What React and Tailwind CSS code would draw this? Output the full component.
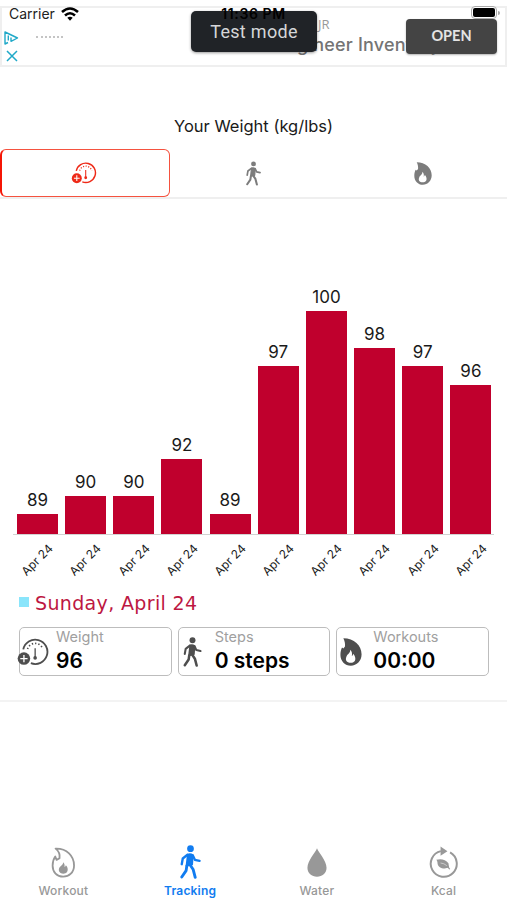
import React from 'react';
import clsx from 'clsx';

const weights = [89, 90, 90, 92, 89, 97, 100, 98, 97, 96];

const WalkIcon = ({ className }) => (
  <svg viewBox="540 48 62 101" className={className} fill="none" stroke="currentColor" strokeLinecap="round" strokeLinejoin="round">
    <circle cx="571" cy="59" r="10" fill="currentColor" stroke="none" />
    <path d="M563 76 Q571 73 578 78 L576 106 L559 110 Z" fill="currentColor" strokeWidth="5" />
    <path d="M562 77 L548 88 L545 105" strokeWidth="7" />
    <path d="M578 79 L584 92 L598 95" strokeWidth="7" />
    <path d="M569 106 L579 121 L585 144" strokeWidth="8.5" />
    <path d="M560 110 L558 124 L545 143" strokeWidth="8.5" />
  </svg>
);

const FlameIcon = ({ className }) => (
  <svg viewBox="271 171 67 86" className={className} fill="currentColor">
    <path
      fillRule="evenodd"
      d="M281 172 C314 172 337 194 337 221 C337 242 322 256 304 256 C286 256 272 242 272 223 C272 213 274 206 277 200 L281 203 L286 197 C287 188 285 180 281 172 Z M302 207 C303 217 295 219 291 227 C285 239 292 247 303 247 C315 247 320 239 317 229 C316 225 314 222 311 219 C311 223 309 225 307 226 C309 219 307 212 302 207 Z"
    />
  </svg>
);

const FlameOutlineIcon = ({ className }) => (
  <svg viewBox="155 47 74 94" className={className} fill="none" stroke="currentColor" strokeWidth="5.5" strokeLinejoin="round">
    <path d="M168 52 C202 51 224 74 224 103 C224 124 209 137 191 137 C172 137 159 123 159 104 C159 92 162 83 167 76 L171 86 L180 81 C182 69 177 59 168 52 Z" />
    <path
      d="M191 93 C191 102 183 103 179 111 C175 121 182 128 191 128 C202 128 207 120 204 110 C203 106 201 104 199 102 C198 105 197 107 195 107 C196 101 195 97 191 93 Z"
      fill="currentColor"
      stroke="none"
    />
  </svg>
);

const ScaleIcon = ({ className }) => (
  <svg viewBox="50 173 97 84" className={className} fill="none" stroke="currentColor">
    <path d="M69 207 A37 37 0 1 1 92 249" strokeWidth="5.5" />
    <path d="M82 206 A24 24 0 0 1 128 206" strokeWidth="5" strokeDasharray="4 6" />
    <path d="M105 204 V230" strokeWidth="4" />
    <circle cx="105" cy="233" r="5.5" fill="currentColor" stroke="none" />
    <circle cx="71" cy="235" r="19" fill="currentColor" stroke="none" />
    <path d="M60 235 H82 M71 224 V246" stroke="white" strokeWidth="4" />
  </svg>
);

const DropIcon = ({ className }) => (
  <svg viewBox="172 55 60 88" className={className} fill="currentColor">
    <path d="M202 56 C206 68 231 93 231 115 C231 132 218 142 202 142 C186 142 173 132 173 115 C173 93 198 68 202 56 Z" />
  </svg>
);

const KcalIcon = ({ className }) => (
  <svg viewBox="538 46 88 96" className={className} fill="none" stroke="currentColor">
    <path d="M602 65 A39.5 39.5 0 1 1 574 61" strokeWidth="6" />
    <path d="M573 47 L594 61 L573 75 Z" fill="currentColor" stroke="none" />
    <path d="M560 87 C572 84 588 84 597 98 L599 111 C581 117 566 111 564 99 C564 94 563 90 560 87 Z" fill="currentColor" stroke="none" />
    <path d="M575 98 Q591 101 601 116" strokeWidth="3.5" />
    <path d="M573 97 Q584 98 592 105" stroke="white" strokeWidth="1.5" />
  </svg>
);

const tabs = [
  { id: 'weight', icon: <ScaleIcon className="w-[26px] h-[22px] -ml-1" /> },
  { id: 'steps', icon: <WalkIcon className="w-[15px] h-[25px]" /> },
  { id: 'workouts', icon: <FlameIcon className="w-[18px] h-[23px]" /> },
];

const stats = [
  { label: 'Weight', value: '96', icon: <ScaleIcon className="w-[32px] h-[28px] -ml-[3px]" /> },
  { label: 'Steps', value: '0 steps', icon: <WalkIcon className="w-[19px] h-[30px] ml-[4px]" /> },
  { label: 'Workouts', value: '00:00', icon: <FlameIcon className="w-[22px] h-[28px] ml-[3px]" /> },
];

const navItems = [
  { label: 'Workout', icon: <FlameOutlineIcon className="w-[25px] h-[31px]" /> },
  { label: 'Tracking', icon: <WalkIcon className="w-[21px] h-[34px]" />, active: true },
  { label: 'Water', icon: <DropIcon className="w-[20px] h-[29px]" /> },
  { label: 'Kcal', icon: <KcalIcon className="w-[29px] h-[32px]" /> },
];

function AdBanner() {
  return (
    <div className="relative h-[67px] pt-1.5">
      <div className="relative h-[61px] border-2 border-[#efefef] overflow-hidden">
        <div className="flex">
          <div className="w-[30px] pt-[23px] pl-[2px] text-[#20a9c8]">
            <svg viewBox="0 0 15 14" className="w-[15px] h-[14px]" fill="none" stroke="currentColor" strokeWidth="1.4" strokeLinejoin="round">
              <path d="M4 11.5 L1 13 V1 L13.5 7 L7 10.3 V6.5 M4.3 4.5 V9.5" />
            </svg>
            <svg viewBox="0 0 12 12" className="w-3 h-3 mt-[5px] ml-0.5" fill="none" stroke="currentColor" strokeWidth="1.5">
              <path d="M1 1 L11 11 M11 1 L1 11" />
            </svg>
          </div>
          <div className="mt-[28px] ml-1 w-[27px] h-0.5 border-t-2 border-dotted border-[#c4c4c4]" />
          <div className="ml-[212px] whitespace-nowrap text-[#747474]">
            <p className="mt-[7px] pl-[43px] font-['Open_Sans'] text-[13px] leading-[18px] text-[#999]">JR</p>
            <p className="text-[18px] leading-6 font-medium tracking-[0.2px]">Engineer Inventory</p>
          </div>
        </div>
      </div>

      <div className="absolute left-[9px] top-[5px] flex items-center gap-1.5 text-[14px] leading-[18px] text-[#222]">
        <span>Carrier</span>
        <svg viewBox="0 0 18 14" className="w-[18px] h-[14px]" fill="none" stroke="black" strokeWidth="2.6">
          <path d="M1 5 Q9 -2 17 5 M4 8.5 Q9 4 14 8.5" />
          <path d="M6.3 10.8 Q9 8.5 11.7 10.8 L9 13.8 Z" fill="black" stroke="none" />
        </svg>
      </div>
      <div className="absolute left-[191px] top-[11px] w-[126px] h-[41px] rounded-[5px] bg-[#202327] shadow-[0_1px_3px_rgba(0,0,0,0.4)] text-center font-['Roboto'] text-[18px] leading-[41px] tracking-[0.3px] text-[#d5d6d8]">
        Test mode
      </div>
      <p className="absolute left-0 w-full top-[5px] text-center text-[14px] leading-[18px] font-semibold text-black tracking-[0.6px]">11:36 PM</p>
      <div className="absolute left-[406px] top-[19px] w-[91px] h-[35px] rounded-[4px] bg-[#444] shadow-[0_1px_2px_rgba(0,0,0,0.3)] text-center font-['Lato'] text-[14.5px] font-bold leading-[34px] text-[#e4e4e4]">
        OPEN
      </div>
      <div className="absolute left-[471px] top-[6px] flex items-center">
        <div className="w-[26px] h-[13px] rounded-[4px] border border-[#aaa] bg-white p-px">
          <div className="h-full rounded-[2px] bg-black" />
        </div>
        <div className="ml-px w-[1.5px] h-1 rounded-r bg-[#aaa]" />
      </div>
    </div>
  );
}

function WeightChart() {
  return (
    <div className="mt-[70px] mx-[13px]">
      <div className="flex h-[266px] items-end gap-[7.17px] pl-1 border-b border-[#d2d2d2]">
        {weights.map((weight, i) => (
          <div key={i} className="w-[41px] shrink-0">
            <p className="mb-[2px] text-center text-[17px] leading-6 text-[#1a1a1a]">{weight}</p>
            <div className="bg-[#c0002d]" style={{ height: 20 + (weight - 89) * 18.45 }} />
          </div>
        ))}
      </div>
      <div className="flex h-[45px] mb-1 items-center gap-[7.17px] pl-[4px]">
        {weights.map((_, i) => (
          <div key={i} className="w-[41px] shrink-0 text-center">
            <span className="inline-block -rotate-45 whitespace-nowrap text-[12px] leading-4 text-[#1a1a1a]">Apr 24</span>
          </div>
        ))}
      </div>
    </div>
  );
}

export default function App() {
  return (
    <div className="flex flex-col w-full h-screen overflow-hidden bg-white font-['Inter',sans-serif]">
      <AdBanner />

      <h1 className="mt-[47px] text-center text-[16.5px] leading-6 text-[#1a1a1a]">Your Weight (kg/lbs)</h1>

      {/* Metric tabs */}
      <div className="mt-[10px] grid grid-cols-3 h-[51px] border-b-2 border-[#efefef]">
        {tabs.map((tab) => (
          <div
            key={tab.id}
            className={clsx(
              'flex items-center justify-center',
              tab.id === 'weight'
                ? 'mr-[-1px] mt-px h-[48px] rounded-[6px] border-[1.5px] border-l-2 border-[#f5523f] border-l-[#f51505] text-[#ee2a18]'
                : 'h-[50px] text-[#7c7c7c]'
            )}
          >
            {tab.icon}
          </div>
        ))}
      </div>

      <WeightChart />

      {/* Selected day */}
      <div className="mt-[6px] ml-[19px] flex items-center">
        <span className="w-[10px] h-[10px] -mt-0.5 bg-[#8ae5fb]" />
        <span className="ml-[6px] font-['DejaVu_Sans'] text-[19px] leading-[26px] tracking-[0.35px] text-[#bd1742]">Sunday, April 24</span>
      </div>

      <div className="mt-[11px] mx-[19px] w-[470px] grid grid-cols-3 gap-[6px]">
        {stats.map((stat) => (
          <div key={stat.label} className="flex items-center h-[49px] rounded-[5px] border-[1.5px] border-[#bdbdbd]">
            <div className="w-[36px] shrink-0 text-[#4e4e4e]">{stat.icon}</div>
            <div className="whitespace-nowrap">
              <p className="text-[14.5px] leading-[18px] text-[#a0a0a0]">{stat.label}</p>
              <p className="mt-px text-[21px] leading-7 font-semibold text-black">{stat.value}</p>
            </div>
          </div>
        ))}
      </div>
      <div className="mt-6 h-0.5 shrink-0 bg-[#f3f3f3]" />

      {/* Bottom navigation */}
      <nav className="mt-auto grid grid-cols-4 h-[56px] shrink-0">
        {navItems.map((item) => (
          <div key={item.label} className={clsx('flex flex-col items-center', item.active ? 'text-[#117cf0]' : 'text-[#989898]')}>
            <div className="h-[36px] flex items-center justify-center">{item.icon}</div>
            <span className={clsx('mt-[3px] text-[12px] leading-4 tracking-[0.2px]', item.active ? 'font-semibold' : 'font-medium')}>{item.label}</span>
          </div>
        ))}
      </nav>
    </div>
  );
}
